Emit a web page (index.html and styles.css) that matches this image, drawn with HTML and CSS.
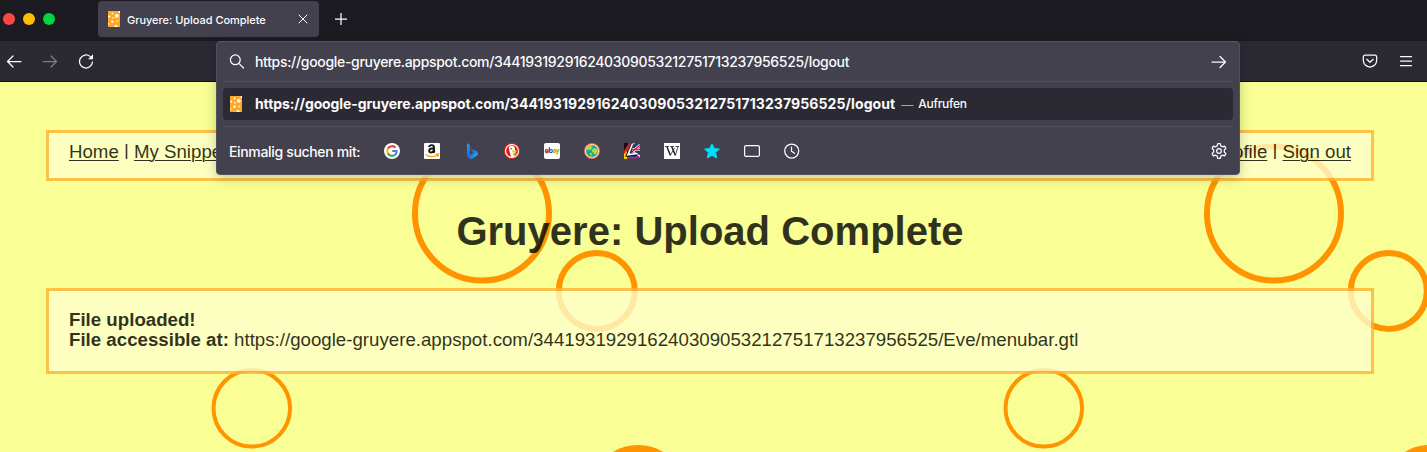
FILE: index.html
```html
<!DOCTYPE html>
<html lang="de">
<head>
<meta charset="utf-8">
<title>Gruyere: Upload Complete</title>
<link rel="stylesheet" href="styles.css">
</head>
<body>
<svg class="defs" width="0" height="0">
  <symbol id="cheese" viewBox="0 0 12 16">
    <rect width="12" height="16" fill="#ffa928"/>
    <g fill="#fff"><circle cx="8.8" cy="4.8" r="1.9"/><circle cx="4.5" cy="2.4" r=".9"/><circle cx="1.2" cy="5.6" r="1.1"/><circle cx="5" cy="6.8" r=".8"/><circle cx="4.4" cy="10.8" r="1.2"/><circle cx="9.3" cy="10.3" r=".8"/><circle cx="11.5" cy="1" r="1"/><circle cx="8" cy="15.5" r="1.6"/><circle cx=".6" cy="13" r=".7"/></g>
  </symbol>
</svg>
<header class="tabs">
  <div class="lights"><i class="red"></i><i class="yellow"></i><i class="green"></i></div>
  <div class="tab">
    <svg width="12" height="16"><use href="#cheese"/></svg>
    <span class="tab-title">Gruyere: Upload Complete</span>
    <svg class="close" width="10" height="10" viewBox="0 0 10 10"><path d="M1 1l8 8M9 1l-8 8"/></svg>
  </div>
  <svg class="plus" width="12" height="12" viewBox="0 0 12 12"><path d="M6 .3v11.4M.3 6h11.4"/></svg>
</header>
<nav class="toolbar">
  <svg class="ic" width="16" height="16" viewBox="0 0 16 16"><path d="M15 8.500H1.500M7 3L1.500 8.500 7 14"/></svg>
  <svg class="ic dim" width="16" height="16" viewBox="0 0 16 16"><path d="M1 8.500h13.500M9 3L14.500 8.500 9 14"/></svg>
  <svg class="ic" width="16" height="16" viewBox="0 0 16 16"><path d="M12.300 3.600A6.500 6.500 0 1 0 14.500 9"/><path d="M15 1.200v5h-5z" fill="#fbfbfe" stroke="none"/></svg>
  <svg class="ic pocket" width="16" height="16" viewBox="0 0 16 16"><path d="M3 2.200h10a1.700 1.700 0 0 1 1.700 1.700v3.400a6.700 6.700 0 0 1-13.400 0V3.900A1.700 1.700 0 0 1 3 2.200zM4.800 6.300L8 9.300l3.200-3"/></svg>
  <svg class="ic" width="16" height="16" viewBox="0 0 16 16"><path d="M2.500 3.500h11M2.500 8h11M2.500 12.500h11"/></svg>
</nav>
<main class="page">
  <svg class="holes" width="1427" height="370" viewBox="0 82 1427 370">
    <defs><g id="tile" fill="none" stroke="#ff9400">
      <circle cx="482" cy="213.500" r="67" stroke-width="6"/>
      <circle cx="596.800" cy="291" r="38" stroke-width="6"/>
      <circle cx="251.800" cy="408.300" r="38.300" stroke-width="4"/>
      <circle cx="638" cy="493" r="44" stroke-width="8"/>
    </g></defs>
    <use href="#tile"/><use href="#tile" x="792"/>
  </svg>
  <div class="box menu">
    <div><a>Home</a> <span class="bar">|</span> <a>My Snippets</a></div>
    <div><a>Profile</a> <span class="bar">|</span> <a>Sign out</a></div>
  </div>
  <h1>Gruyere: Upload Complete</h1>
  <div class="box message">
    <b>File uploaded!</b><br>
    <b>File accessible at:</b> https://google-gruyere.appspot.com/344193192916240309053212751713237956525/Eve/menubar.gtl
  </div>
</main>
<section class="popup">
  <div class="input-row">
    <svg class="ic" width="16" height="16" viewBox="0 0 16 16"><circle cx="6.300" cy="5.800" r="4.900"/><path d="M9.900 9.400L14.500 14"/></svg>
    <span class="url">https://google-gruyere.appspot.com/344193192916240309053212751713237956525/logout</span>
    <svg class="ic go" width="16" height="16" viewBox="0 0 16 16"><path d="M1 8h13.500M9 2.500L14.500 8 9 13.500"/></svg>
  </div>
  <div class="result">
    <svg width="12" height="16"><use href="#cheese"/></svg>
    <b class="result-url"><span class="host">https://google-gruyere.appspot.com/</span>344193192916240309053212751713237956525/logout</b>
    <span class="dash">—</span><span class="action">Aufrufen</span>
  </div>
  <div class="engines">
    <span class="label">Einmalig suchen mit:</span>
    <div class="icons">
      <svg width="16" height="16" viewBox="0 0 16 16"><circle cx="8" cy="8" r="8" fill="#fff"/><g fill="none" stroke-width="2.100"><path d="M3.800 5.800A4.700 4.700 0 0 1 11.500 4.700" stroke="#ea4335"/><path d="M3.800 5.800a4.700 4.700 0 0 0 0 4.400" stroke="#fbbc05"/><path d="M3.800 10.200a4.700 4.700 0 0 0 7.200 1.500" stroke="#34a853"/><path d="M11 11.700A4.700 4.700 0 0 0 12.700 8H8.200" stroke="#4285f4"/></g></svg>
      <svg width="16" height="16" viewBox="0 0 16 16"><rect width="16" height="16" rx="1" fill="#fff"/><path d="M5.100 4.100Q5.500 2 7.900 2.100 10 2.200 10 4.500V8q0 1 .8 1.600M9.700 5.500Q5 5.200 5.200 7.800 5.500 9.800 7.500 9.400 9.700 8.900 9.700 6.700" fill="none" stroke="#111" stroke-width="1.900"/><path d="M1.500 11.400q6 4.200 12 .6M11.700 11.300l2.800-.3-.7 2.700" fill="none" stroke="#f90" stroke-width="1.200"/></svg>
      <svg width="16" height="16" viewBox="0 0 16 16"><defs><linearGradient id="bing" x2="1" y2="1"><stop stop-color="#24a5f0"/><stop offset=".5" stop-color="#176be8"/><stop offset="1" stop-color="#35c6f0"/></linearGradient></defs><path d="M3 .3l2.900 1.500v10.200l2.900-1.700 1-.8-1.800-.8-1.200-3.200 4.800 1.900q2.200 1 2.200 3 0 1.700-1.500 2.700l-4 2.400q-1.500.7-2.900-.1Q3 14.200 3 11.900z" fill="url(#bing)"/></svg>
      <svg width="16" height="16" viewBox="0 0 16 16"><circle cx="8" cy="8" r="8" fill="#de2010"/><circle cx="8" cy="8" r="6.500" fill="none" stroke="#fff" stroke-width="1.200"/><path d="M4.800 4.200q1.800-2.500 4.500-1.200 2 1.100 1.800 4l.4 6Q8.200 15 7 13.700L5.200 7z" fill="#fff"/><path d="M8 7.200l4.800.2-.8 2-3.600.4z" fill="#fc3"/><path d="M8.600 10.800l3.500-.7v3l-2.300-.7z" fill="#65bc46"/><circle cx="7.200" cy="5.700" r=".8" fill="#2d4f8e"/></svg>
      <svg width="16" height="16" viewBox="0 0 16 16"><rect width="16" height="16" rx="2" fill="#fff"/><g fill="none" stroke-width="1.200"><path d="M1.300 8.300h3Q4 6.300 2.700 6.400 1.200 6.600 1.300 8.300 1.500 10 3 9.800q1 0 1.300-.7" stroke="#e53238"/><path d="M5.400 4.200v5.500M5.400 8.100a1.500 1.500 0 1 0 3 0 1.500 1.500 0 1 0-3 0" stroke="#0064d2"/><path d="M8.900 7.300q.4-1 1.500-.9 1 .1 1 1v2.400m0-1.900q-2.300 0-2.200 1 .2 1 1.200.8 1-.2 1-1" stroke="#f5af02"/><path d="M12 6l1.500 3.500L15.200 6M13.500 9.500l-.9 2" stroke="#86b817"/></g></svg>
      <svg width="16" height="16" viewBox="0 0 16 16"><circle cx="8" cy="8" r="8" fill="#f0613f"/><circle cx="8" cy="8" r="7.100" fill="#f9e7bd"/><circle cx="8" cy="8" r="6" fill="#14a8a0"/><path d="M3 5q1.500-2.500 4.500-2.700l1.500 1-2 1.200 1 1.500-2 1-1.500-.5-1.300 1-.7-1zM8.300 6.200l2.500-1.200 2.700 1.500.2 2-2 2.800-1.700.3-.5-2.100-1.600-.6z" fill="#bfd63a"/><path d="M6 9.500l2 1-.5 2.500-1.500-1z" fill="#bfd63a"/></svg>
      <svg width="16" height="16" viewBox="0 0 16 16"><rect width="16" height="16" fill="#23398c"/><path d="M0 0h5L0 9z" fill="#111"/><path d="M5 0h4L0 14V8z" fill="#d22"/><path d="M0 11l3-3v8H0zM8 0h3L6 7H4z" fill="#ffce00"/><path d="M9 8l7-6M8 6.500h8M9 9l7 5" stroke="#fff" stroke-width="2.600"/><path d="M9 8l7-6M8 6.500h8M9 10l7 5M3 14.800h10" stroke="#e0203a" stroke-width="1.500"/><path d="M8.500.5L3.500 12l10-1" fill="none" stroke="#111" stroke-width="3"/><path d="M8.500.8L4 11.700l9.500-1.200" fill="none" stroke="#fff" stroke-width="1.700"/></svg>
      <svg width="16" height="16" viewBox="0 0 16 16"><rect width="16" height="16" fill="#fff"/><path d="M1 3.500h4M6.200 3.500h4M11.500 3.500H15M3 3.700l3.300 8.600L10.500 5M7.800 3.700l3.500 8.600L14 3.700" fill="none" stroke="#222" stroke-width=".8"/><path d="M3 3.700l3.300 8.600M7.800 3.700l3.500 8.600" stroke="#222" stroke-width="1.300"/></svg>
      <svg width="16" height="16" viewBox="0 0 16 16"><path d="M8 .8l2.200 4.700 5.200.6-3.900 3.500 1.100 5.300L8 12.300l-4.600 2.600 1.100-5.300L.6 6.100l5.200-.6z" fill="#00ddff" stroke="#00ddff" stroke-linejoin="round"/></svg>
      <svg class="ic" width="16" height="16" viewBox="0 0 16 16"><rect x=".6" y="2.600" width="14.800" height="10.800" rx="1.500"/></svg>
      <svg class="ic" width="16" height="16" viewBox="0 0 16 16"><circle cx="7.700" cy="8" r="7"/><path d="M7.500 4v4.300l3 2"/></svg>
    </div>
    <svg class="ic gear" width="16" height="16" viewBox="0 0 16 16"><circle cx="8" cy="8" r="2.300"/><path d="M6.700.7h2.600l.5 2.200 1.600.9 2.200-.7 1.300 2.300-1.600 1.600v2l1.600 1.600-1.300 2.300-2.200-.7-1.600.9-.5 2.200H6.700l-.5-2.200-1.600-.9-2.200.7-1.300-2.300L2.700 9V7L1.100 5.400l1.300-2.300 2.200.7 1.600-.9z" stroke-linejoin="round"/></svg>
  </div>
</section>
</body>
</html>
```
FILE: styles.css
```css
* { box-sizing: border-box; }
body { margin: 0; width: 1427px; height: 452px; overflow: hidden; position: relative; background: #f9ff94; font-family: Inter, sans-serif; color: #fbfbfe; }
svg { display: block; flex: none; }
.defs { position: absolute; }
.ic, .plus, .close { fill: none; stroke: #fbfbfe; stroke-width: 1.25; stroke-linecap: round; stroke-linejoin: round; }
.dim { opacity: .4; }
.tabs { height: 41px; background: #1c1b22; display: flex; align-items: flex-start; }
.lights { display: flex; gap: 8px; padding: 13px 0 0 3px; width: 98px; }
.lights i { width: 12px; height: 12px; border-radius: 50%; }
.red { background: #ff4643; }
.yellow { background: #ffbd00; }
.green { background: #00d543; }
.tab { width: 221px; height: 36px; margin-top: 1px; border-radius: 4px; background: #42414d; display: flex; align-items: center; padding: 0 11px 0 10px; }
.tab-title { font-size: 11px; font-weight: 500; margin-left: 7px; letter-spacing: -.03px; white-space: nowrap; padding-top: 2px; }
.close { margin-left: auto; stroke-width: 1; }
.plus { margin: 13px 0 0 16px; }
.toolbar { height: 41px; background: #2b2a33; border-bottom: 1px solid #0c0c0d; display: flex; align-items: center; gap: 20px; padding: 0 13px 0 6px; }
.pocket { margin-left: auto; }
.page { position: relative; height: 370px; padding: 48px 53px 0 46px; font: 18.67px/20px "Liberation Sans", Arial, sans-serif; }
.holes { position: absolute; left: 0; top: 0; }
.box { position: relative; border: 3px solid #ffb236; background: #ffffcb; opacity: .8; color: #000; padding: 0 20px; }
.menu { height: 51px; display: flex; justify-content: space-between; padding-top: 9px; }
.menu a { text-decoration: underline; text-underline-offset: 2px; text-decoration-thickness: 1px; }
.bar { display: inline-block; transform: translateY(-1px) scaleY(.85); }
h1 { position: relative; margin: 26px 0 33px; font-size: 40px; line-height: 48px; text-align: center; color: #000; opacity: .8; letter-spacing: .02px; }
.message { height: 86px; padding-top: 19px; letter-spacing: .01px; }
.popup { position: absolute; left: 216px; top: 41px; width: 1024px; height: 134px; background: #42414d; border: 1px solid #52525e; border-radius: 4px; box-shadow: 0 3px 12px rgba(0,0,0,.22); padding: 0 6px; }
.input-row { height: 40px; display: flex; align-items: center; padding: 0 6px; border-bottom: 1px solid #52525e; }
.url { font-size: 14px; margin-left: 10px; font-weight: 450; letter-spacing: -.315px; white-space: nowrap; }
.go { margin-left: auto; }
.result { margin: 6px 0; height: 32px; border-radius: 4px; background: #2b2a33; display: flex; align-items: center; padding-left: 7px; white-space: nowrap; }
.result-url { font-size: 14px; margin-left: 13px; letter-spacing: .1px; padding-bottom: 1px; }
.host { letter-spacing: -.1px; }
.dash { margin-left: 6px; font-size: 12px; color: #a5a5ad; }
.action { margin-left: 5px; font-size: 12px; font-weight: 450; letter-spacing: -.3px; padding-bottom: 1px; }
.engines { height: 49px; border-top: 1px solid #52525e; display: flex; align-items: center; padding: 0 6px; }
.label { font-size: 14px; width: 155px; font-weight: 450; letter-spacing: -.34px; white-space: nowrap; }
.icons { display: flex; gap: 24px; }
.gear { margin-left: auto; }
```
